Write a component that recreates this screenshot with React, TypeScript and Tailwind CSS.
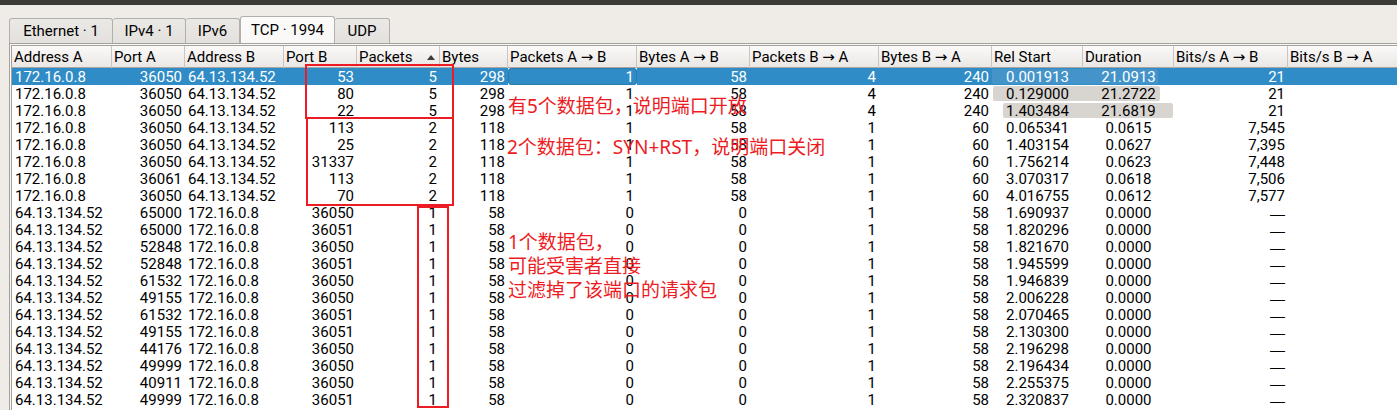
import React from "react";

type Align = "left" | "right" | "center";

const columns: { title: string; width: string; align: Align }[] = [
  { title: "Address A", width: "w-[100px]", align: "left" },
  { title: "Port A", width: "w-[73px]", align: "right" },
  { title: "Address B", width: "w-[99px]", align: "left" },
  { title: "Port B", width: "w-[73px]", align: "right" },
  { title: "Packets", width: "w-[83px]", align: "right" },
  { title: "Bytes", width: "w-[68px]", align: "right" },
  { title: "Packets A → B", width: "w-[129px]", align: "right" },
  { title: "Bytes A → B", width: "w-[113px]", align: "right" },
  { title: "Packets B → A", width: "w-[129px]", align: "right" },
  { title: "Bytes B → A", width: "w-[113px]", align: "right" },
  { title: "Rel Start", width: "w-[91px]", align: "center" },
  { title: "Duration", width: "w-[91px]", align: "center" },
  { title: "Bits/s A → B", width: "w-[114px]", align: "right" },
  { title: "Bits/s B → A", width: "", align: "right" },
];

const alignClass: Record<Align, string> = {
  left: "text-left",
  right: "text-right",
  center: "text-center",
};

const V = "172.16.0.8";
const S = "64.13.134.52";

const rows: string[][] = [
  [V, "36050", S, "53", "5", "298", "1", "58", "4", "240", "0.001913", "21.0913", "21"],
  [V, "36050", S, "80", "5", "298", "1", "58", "4", "240", "0.129000", "21.2722", "21"],
  [V, "36050", S, "22", "5", "298", "1", "58", "4", "240", "1.403484", "21.6819", "21"],
  [V, "36050", S, "113", "2", "118", "1", "58", "1", "60", "0.065341", "0.0615", "7,545"],
  [V, "36050", S, "25", "2", "118", "1", "58", "1", "60", "1.403154", "0.0627", "7,395"],
  [V, "36050", S, "31337", "2", "118", "1", "58", "1", "60", "1.756214", "0.0623", "7,448"],
  [V, "36061", S, "113", "2", "118", "1", "58", "1", "60", "3.070317", "0.0618", "7,506"],
  [V, "36050", S, "70", "2", "118", "1", "58", "1", "60", "4.016755", "0.0612", "7,577"],
  ...[
    ["65000", "36050", "1.690937"],
    ["65000", "36051", "1.820296"],
    ["52848", "36050", "1.821670"],
    ["52848", "36051", "1.945599"],
    ["61532", "36050", "1.946839"],
    ["49155", "36050", "2.006228"],
    ["61532", "36051", "2.070465"],
    ["49155", "36051", "2.130300"],
    ["44176", "36050", "2.196298"],
    ["49999", "36050", "2.196434"],
    ["40911", "36050", "2.255375"],
    ["49999", "36051", "2.320837"],
  ].map(([a, b, t]) => [S, a, V, b, "1", "58", "0", "0", "1", "58", t, "0.0000", "—"]),
];

const timelineBars = [
  "left-0 w-[166px] bg-[#4494ca]",
  "left-px w-[167px] bg-[#d8d5d1]",
  "left-[11px] w-[170px] bg-[#d8d5d1]",
];

const tabs = [
  { label: "Ethernet · 1", width: "w-[104px]" },
  { label: "IPv4 · 1", width: "w-[73px]" },
  { label: "IPv6", width: "w-[54px]" },
  { label: "TCP · 1994", width: "w-[95px]" },
  { label: "UDP", width: "w-[55px]" },
];

function Tabs() {
  return (
    <div role="tablist" className="flex h-[26px] items-end pl-[9px]">
      {tabs.map(({ label, width }, i) => {
        const active = label.startsWith("TCP");
        return (
          <button
            key={label}
            role="tab"
            aria-selected={active}
            className={`${width} flex items-center justify-center rounded-t-[3px] border-t border-r border-[#b3b0ab] ${
              active
                ? "h-[27px] border-l border-[#a5a29d] bg-gradient-to-b from-[#fcfbfa] to-[#f9f8f6]"
                : `h-[25px] bg-gradient-to-b from-[#ebe9e6] to-[#e3e0dd] pt-px ${i === 0 ? "border-l" : ""}`
            }`}
          >
            {label}
          </button>
        );
      })}
    </div>
  );
}

function Annotations() {
  return (
    <div className="pointer-events-none font-['Noto_Sans','Noto_Sans_CJK_SC',sans-serif] text-[19px] leading-6 whitespace-nowrap text-[#ed1c24]">
      <div className="absolute top-[64px] left-[305px] h-[55px] w-[149px] border-2 border-[#ed1c24]" />
      <div className="absolute top-[117px] left-[306px] h-[89px] w-[148px] border-2 border-[#ed1c24]" />
      <div className="absolute top-[206px] left-[417px] h-[202px] w-[32px] border-2 border-[#ed1c24]" />
      <p className="absolute top-[94px] left-[508px]">有5个数据包，说明端口开放</p>
      <p className="absolute top-[135px] left-[507px]">2个数据包：SYN+RST，说明端口关闭</p>
      <p className="absolute top-[230px] left-[508px]">
        1个数据包，
        <br />
        可能受害者直接
        <br />
        过滤掉了该端口的请求包
      </p>
    </div>
  );
}

export default function App() {
  return (
    <div className="relative flex min-h-screen flex-col overflow-hidden bg-[#efebe7] font-['Roboto','DejaVu_Sans','Noto_Sans_CJK_SC',sans-serif] text-[15px] leading-[17px] text-black">
      <div className="h-[5px] bg-[#3c3b37]" />
      <div className="pt-[12px]">
        <Tabs />
      </div>
      <div className="ml-[9px] flex grow flex-col border-t border-l border-[#a5a29d] bg-[#f9f8f6] pt-px pl-px">
        <div className="grow border-t border-l border-[#a5a29d] bg-white">
          <table className="w-full table-fixed border-collapse">
            <colgroup>
              {columns.map((c) => (
                <col key={c.title} className={c.width} />
              ))}
            </colgroup>
            <thead>
              <tr className="h-[22px] bg-gradient-to-b from-[#fbfaf9] to-[#e9e6e3] shadow-[inset_0_-1px_0_#a9a6a1]">
                {columns.map((c, i) => (
                  <th
                    key={c.title}
                    scope="col"
                    className={`relative p-0 pl-[2px] text-left font-normal whitespace-nowrap ${
                      i < columns.length - 1 ? "shadow-[inset_-1px_0_0_#c9c6c2]" : ""
                    }`}
                  >
                    {c.title}
                    {i === 4 && (
                      <svg className="absolute top-[9px] right-[5px]" width="8" height="5" viewBox="0 0 8 5">
                        <path d="M0 5 4 0 8 5Z" fill="#3c3b37" />
                      </svg>
                    )}
                  </th>
                ))}
              </tr>
            </thead>
            <tbody>
              {rows.map((row, r) => (
                <tr key={r} className={r === 0 ? "h-[17px] bg-[#308cc6] text-white" : "h-[17px]"}>
                  {columns.map((c, i) => (
                    <td
                      key={c.title}
                      className={`px-[3px] pt-[2px] pb-0 leading-[15px] whitespace-nowrap ${alignClass[c.align]} ${
                        i === 10 ? "relative" : ""
                      } ${i === 11 ? "relative z-10" : ""} ${
                        r === 0 && i === 6 ? "rounded-sm shadow-[inset_0_0_0_1px_#2a7cb0]" : ""
                      } ${row[i] === "—" ? "font-['Liberation_Sans',sans-serif]" : ""}`}
                    >
                      {i === 10 && timelineBars[r] && (
                        <span className={`absolute top-px h-[15px] rounded-[2px] ${timelineBars[r]}`} />
                      )}
                      <span className="relative">{row[i]}</span>
                    </td>
                  ))}
                </tr>
              ))}
            </tbody>
          </table>
        </div>
      </div>
      <Annotations />
    </div>
  );
}
